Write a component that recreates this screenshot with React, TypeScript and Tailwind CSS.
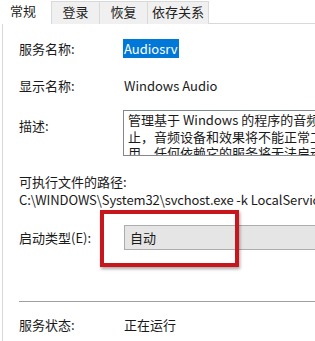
import React from "react";

const tabs = [
  { label: "登录", w: "w-[49px]" },
  { label: "恢复", w: "w-[49px]" },
  { label: "依存关系", w: "w-[62px]" },
];

function Row({ label, children, className = "" }: { label: string; children?: React.ReactNode; className?: string }) {
  return (
    <div className={`flex items-center ${className}`}>
      <div className="w-[105px] shrink-0">{label}</div>
      <div className="flex-1 whitespace-nowrap">{children}</div>
    </div>
  );
}

export default function App() {
  return (
    <div
      className="relative w-[315px] h-[341px] overflow-hidden bg-white text-[13px] leading-[16px] text-[#1a1a1a]"
      style={{ fontFamily: '"Segoe UI", "Noto Sans CJK SC", sans-serif' }}
    >
      {/* tabs */}
      <div className="flex h-[24px] border-b border-[#d9d9d9]">
        <div className="w-[52px] h-[24px] pl-[10px] pt-[3px] bg-white text-[#222]">常规</div>
        {tabs.map((t) => (
          <div
            key={t.label}
            className={`${t.w} h-[23px] mt-[1px] pt-[2px] text-center bg-[#f0f0f0] border border-b-0 border-[#d9d9d9] -ml-px first:ml-0 text-[#222]`}
          >
            {t.label}
          </div>
        ))}
      </div>

      {/* panel */}
      <div className="ml-[2px] border-l border-[#d9d9d9] h-[317px] pl-[16px]">
        <Row label="服务名称:" className="pt-[17px] h-[33px]">
          <span className="bg-[#0078d7] text-white px-px -ml-px">Audiosrv</span>
        </Row>
        <Row label="显示名称:" className="mt-[21px] h-[16px]">
          Windows Audio
        </Row>
        <div className="flex mt-[16px]">
          <div className="w-[104px] shrink-0 pt-[8px]">描述:</div>
          <div className="flex-1 h-[46px] border border-[#828790] border-r-0 overflow-hidden pl-[4px] pt-px leading-[16.5px] whitespace-nowrap">
            <div>管理基于 Windows 的程序的音频。如果此服务被终</div>
            <div>止，音频设备和效果将不能正常工作。如果此服务被禁</div>
            <div>用，任何依赖它的服务将无法启动。</div>
          </div>
        </div>
        <div className="mt-[18px] h-[16px]">可执行文件的路径:</div>
        <div className="mt-[2px] h-[16px] whitespace-nowrap tracking-[-0.1px]">C:\WINDOWS\System32\svchost.exe -k LocalService</div>
        <Row label="启动类型(E):" className="mt-[17px] h-[25px]">
          <div className="h-[25px] bg-[#e5e5e5] border border-[#adadad] border-r-0 pl-[5px] flex items-center">自动</div>
        </Row>
        <div className="mt-[51px] h-px bg-[#a0a0a0]" />
        <Row label="服务状态:" className="mt-[15px] h-[16px]">
          正在运行
        </Row>
      </div>

      {/* red annotation box */}
      <div className="absolute left-[100px] top-[210px] w-[139px] h-[57px] border-[4px] border-[#c8161d] shadow-[1px_2px_3px_rgba(0,0,0,0.35)]" />
    </div>
  );
}
